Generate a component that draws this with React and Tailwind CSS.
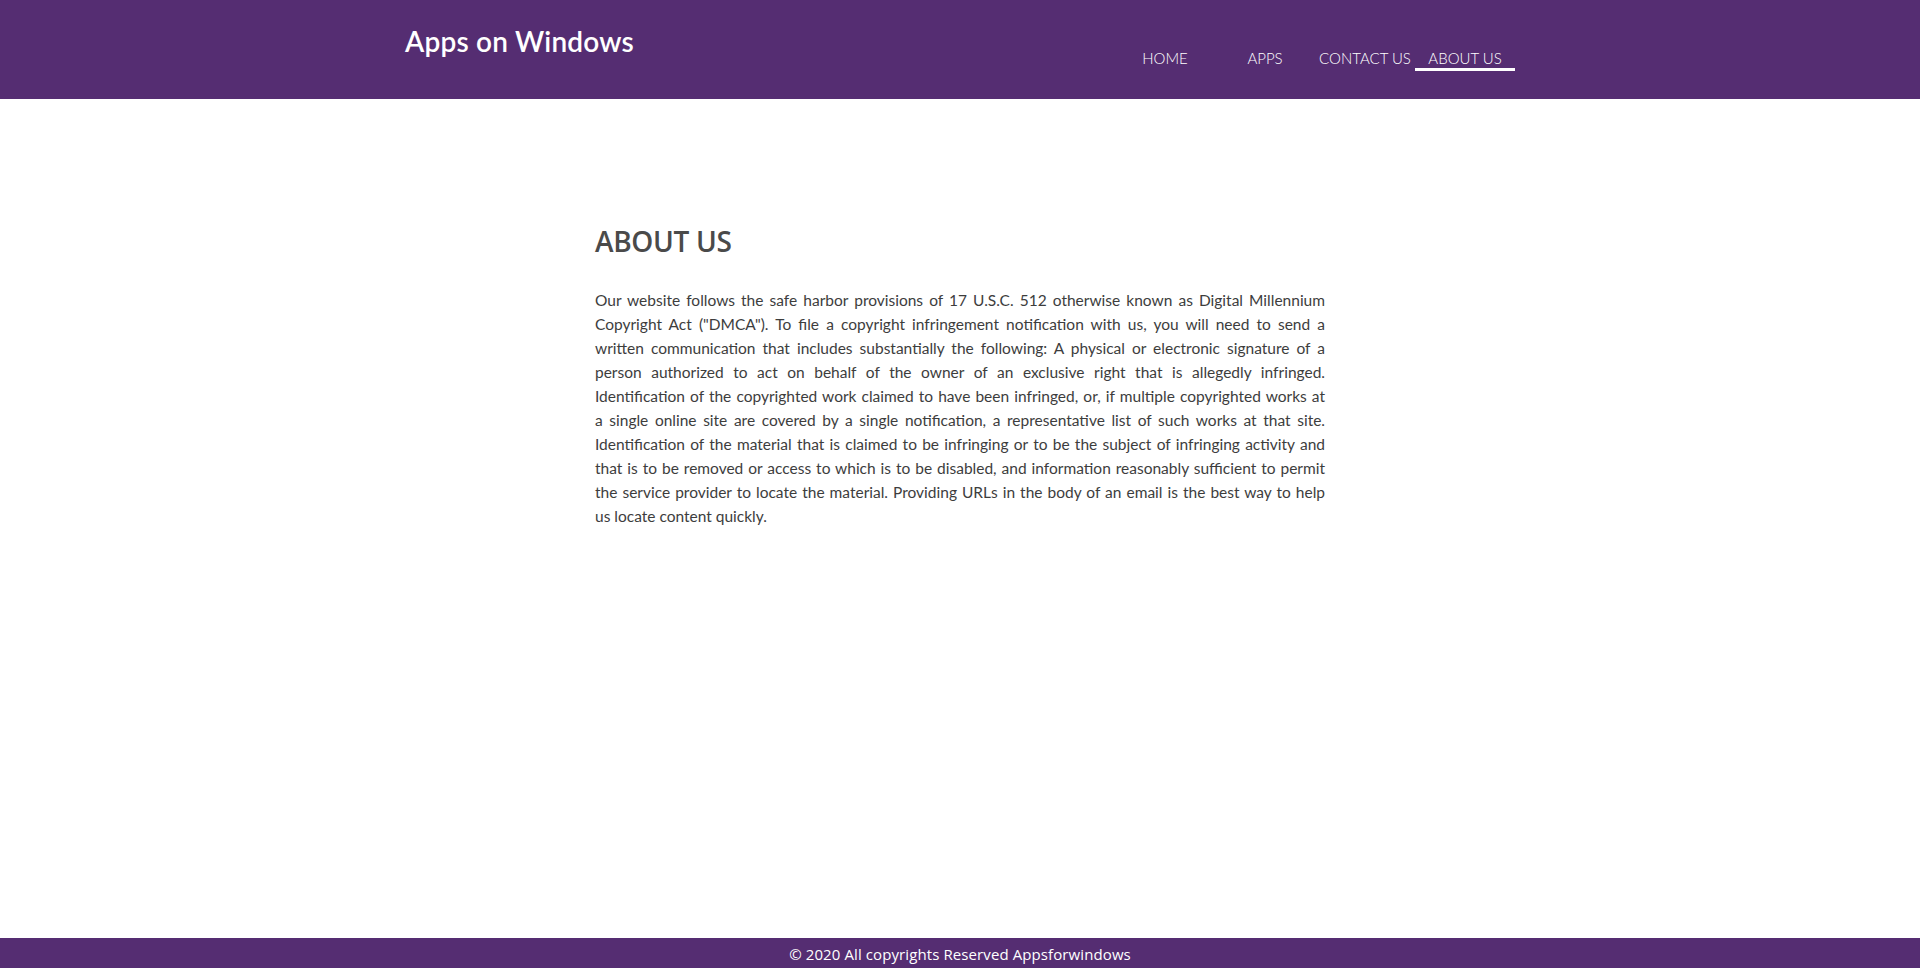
const NAV = ["HOME", "APPS", "CONTACT US", "ABOUT US"];

const LINES = [
  "Our website follows the safe harbor provisions of 17 U.S.C. 512 otherwise known as Digital Millennium",
  'Copyright Act ("DMCA"). To file a copyright infringement notification with us, you will need to send a',
  "written communication that includes substantially the following: A physical or electronic signature of a",
  "person authorized to act on behalf of the owner of an exclusive right that is allegedly infringed.",
  "Identification of the copyrighted work claimed to have been infringed, or, if multiple copyrighted works at",
  "a single online site are covered by a single notification, a representative list of such works at that site.",
  "Identification of the material that is claimed to be infringing or to be the subject of infringing activity and",
  "that is to be removed or access to which is to be disabled, and information reasonably sufficient to permit",
  "the service provider to locate the material. Providing URLs in the body of an email is the best way to help",
  "us locate content quickly.",
];

export default function App() {
  return (
    <div className="min-h-screen flex flex-col bg-white font-['Open_Sans',sans-serif]">
      <header className="h-[99px] bg-[#552d72] flex shrink-0">
        <div className="w-[1110px] mx-auto flex justify-between">
          <h1 className="pt-[22px] text-[28px] leading-[38px] font-semibold text-white font-['Lato',sans-serif] tracking-[0.2px]">
            Apps on Windows
          </h1>
          <nav className="flex pt-[45px]">
            {NAV.map((item) => (
              <a
                key={item}
                className={
                  "w-[100px] h-[26px] pt-[3px] flex items-center justify-center text-[15px] font-light text-white font-['Lato',sans-serif] whitespace-nowrap border-b-[3px] " +
                  (item === "ABOUT US" ? "border-white" : "border-transparent")
                }
              >
                {item}
              </a>
            ))}
          </nav>
        </div>
      </header>

      <main className="flex-1">
        <div className="w-[730px] mx-auto pt-[123px]">
          <h2 className="text-[28px] leading-[38px] font-semibold text-[#4a4a4a] tracking-[-0.3px]">ABOUT US</h2>
          <div className="mt-[28px] text-[15.5px] leading-[24px] text-[#3d3d3d] font-['Lato',sans-serif]">
            {LINES.map((line, i) => (
              <p
                key={i}
                className={
                  "whitespace-nowrap text-justify " + (i < LINES.length - 1 ? "[text-align-last:justify]" : "")
                }
              >
                {line}
              </p>
            ))}
          </div>
        </div>
      </main>

      <footer className="h-[30px] pt-[3px] bg-[#552d72] flex items-center justify-center shrink-0">
        <p className="text-[15px] text-white tracking-[0.1px]">© 2020 All copyrights Reserved Appsforwindows</p>
      </footer>
    </div>
  );
}
